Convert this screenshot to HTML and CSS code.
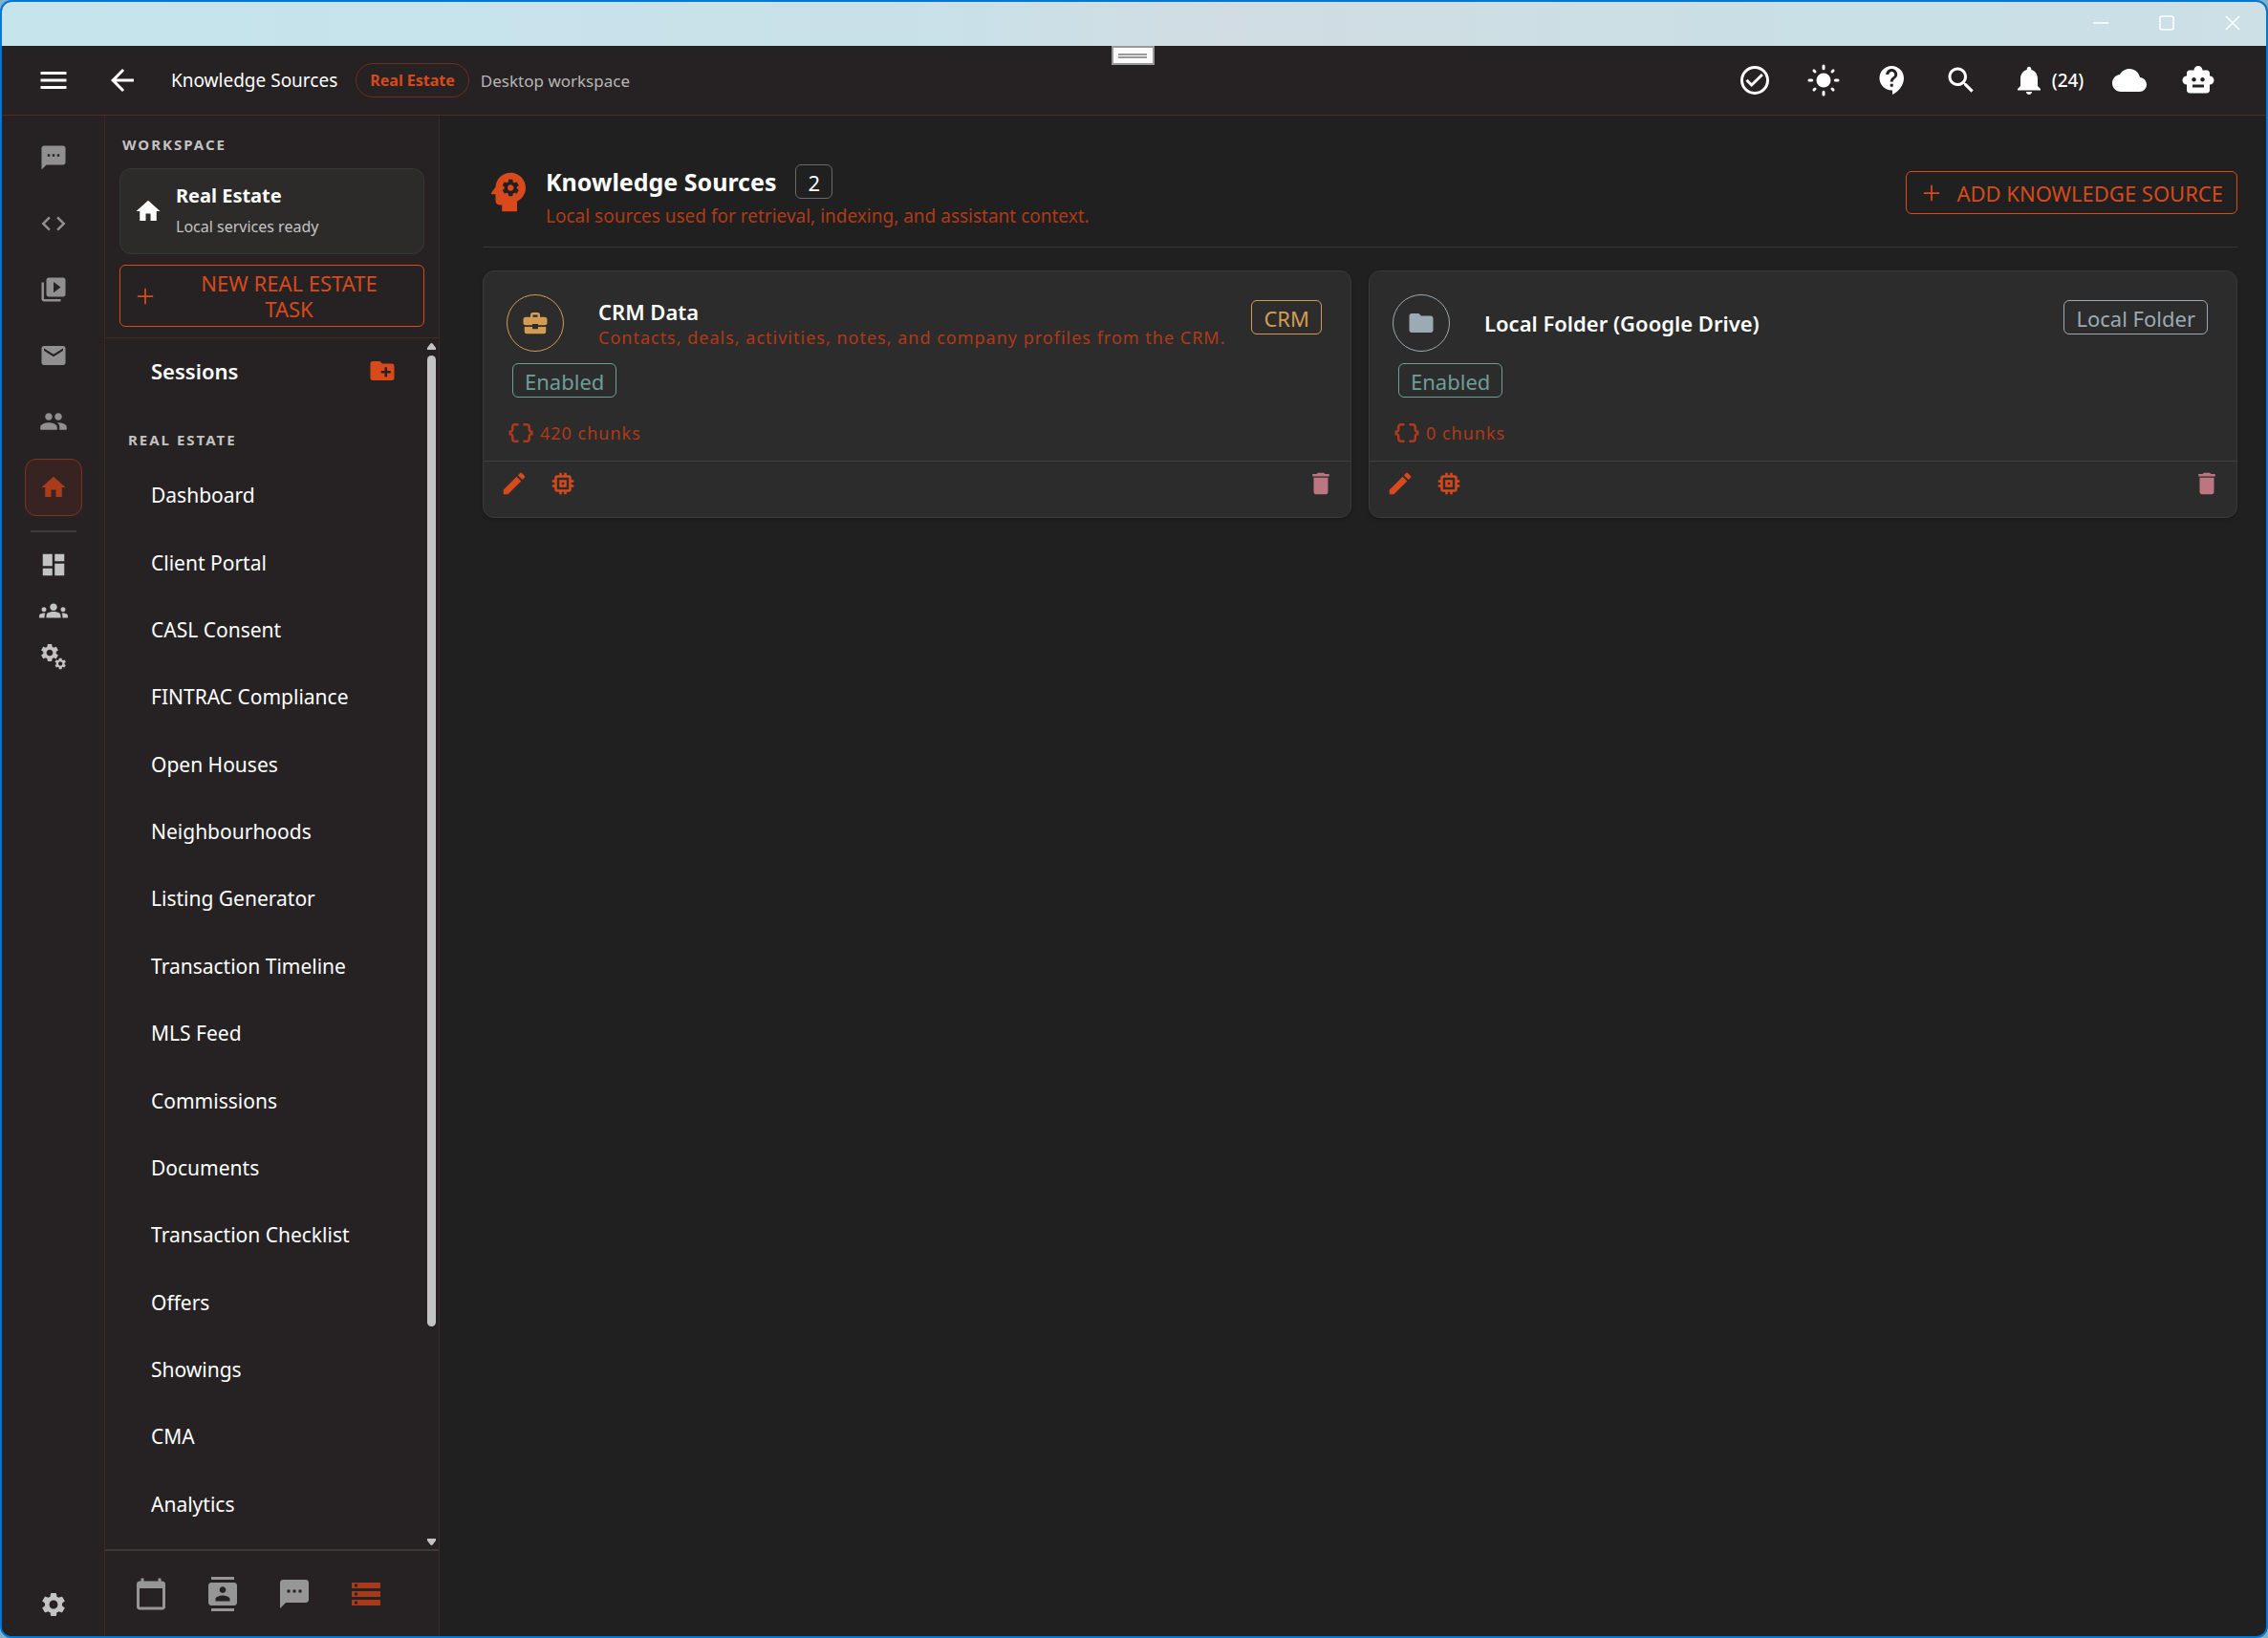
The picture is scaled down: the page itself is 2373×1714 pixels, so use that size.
FILE: index.html
```html
<!DOCTYPE html>
<html lang="en">
<head>
<meta charset="utf-8">
<title>Knowledge Sources</title>
<link rel="stylesheet" href="styles.css">
</head>
<body>
<svg class="defs" aria-hidden="true">
  <symbol id="i-chat" viewBox="0 0 24 24"><path d="M20 2H4c-1.100 0-2 .9-2 2v18l4-4h14c1.100 0 2-.9 2-2V4c0-1.100-.9-2-2-2zM9 11H7V9h2v2zm4 0h-2V9h2v2zm4 0h-2V9h2v2z"/></symbol>
  <symbol id="i-home" viewBox="0 0 24 24"><path d="M10 20v-6h4v6h5v-8h3L12 3 2 12h3v8z"/></symbol>
  <symbol id="i-plus" viewBox="0 0 24 24"><path d="M19 12.750h-6.250V19h-1.500v-6.250H5v-1.500h6.250V5h1.500v6.250H19z"/></symbol>
  <symbol id="i-gear" viewBox="0 0 24 24"><path d="M19.140 12.940c.04-.3.06-.61.06-.94 0-.32-.02-.64-.07-.94l2.030-1.580c.18-.14.23-.41.12-.61l-1.920-3.320c-.12-.22-.37-.29-.59-.22l-2.390.96c-.5-.38-1.030-.7-1.620-.94l-.36-2.540c-.04-.24-.24-.41-.48-.41h-3.840c-.24 0-.43.17-.47.41l-.36 2.540c-.59.24-1.130.57-1.620.94l-2.390-.96c-.22-.08-.47 0-.59.22L2.740 8.870c-.12.21-.08.47.12.61l2.030 1.580c-.05.3-.09.63-.09.94s.02.64.07.94l-2.030 1.580c-.18.14-.23.41-.12.61l1.920 3.320c.12.22.37.29.59.22l2.390-.96c.5.38 1.030.7 1.620.94l.36 2.540c.05.24.24.41.48.41h3.840c.24 0 .44-.17.47-.41l.36-2.540c.59-.24 1.130-.56 1.620-.94l2.390.96c.22.08.47 0 .59-.22l1.920-3.320c.12-.22.07-.47-.12-.61l-2.010-1.580zM12 15.600c-1.980 0-3.600-1.620-3.600-3.600s1.620-3.600 3.600-3.600 3.600 1.620 3.600 3.600-1.620 3.600-3.600 3.600z"/></symbol>
  <symbol id="i-pencil" viewBox="0 0 24 24"><path d="M3 17.250V21h3.750L17.810 9.940l-3.750-3.750L3 17.250zM20.710 7.040c.39-.39.39-1.020 0-1.410l-2.340-2.340c-.39-.39-1.020-.39-1.410 0l-1.830 1.830 3.750 3.750 1.830-1.830z"/></symbol>
  <symbol id="i-memory" viewBox="0 0 24 24"><path d="M15 9H9v6h6V9zm-2 4h-2v-2h2v2zm8-2V9h-2V7c0-1.100-.9-2-2-2h-2V3h-2v2h-2V3H9v2H7c-1.100 0-2 .9-2 2v2H3v2h2v2H3v2h2v2c0 1.100.9 2 2 2h2v2h2v-2h2v2h2v-2h2c1.100 0 2-.9 2-2v-2h2v-2h-2v-2h2zm-4 6H7V7h10v10z"/></symbol>
  <symbol id="i-trash" viewBox="0 0 24 24"><path d="M6 19c0 1.100.9 2 2 2h8c1.100 0 2-.9 2-2V7H6v12zM19 4h-3.500l-1-1h-5l-1 1H5v2h14V4z"/></symbol>
  <symbol id="i-braces" viewBox="0 0 24 24"><path d="M4 7v2c0 .55-.45 1-1 1H2v4h1c.55 0 1 .45 1 1v2c0 1.650 1.350 3 3 3h3v-2H7c-.55 0-1-.45-1-1v-2c0-1.300-.84-2.420-2-2.830v-.34C5.160 11.420 6 10.300 6 9V7c0-.55.45-1 1-1h3V4H7C5.350 4 4 5.350 4 7zM21 10c-.55 0-1-.45-1-1V7c0-1.650-1.350-3-3-3h-3v2h3c.55 0 1 .45 1 1v2c0 1.300.84 2.420 2 2.830v.34c-1.160.41-2 1.520-2 2.830v2c0 .55-.45 1-1 1h-3v2h3c1.650 0 3-1.350 3-3v-2c0-.55.45-1 1-1h1v-4h-1z"/></symbol>
</svg>

<div class="window">
  <div class="titlebar">
    <button class="winbtn" aria-label="Minimize"><svg class="i16" viewBox="0 0 16 16"><path class="line" d="M0 8h16"/></svg></button>
    <button class="winbtn" aria-label="Maximize"><svg class="i16" viewBox="0 0 16 16"><rect class="line" x="1" y="1" width="14" height="14" rx="2"/></svg></button>
    <button class="winbtn" aria-label="Close"><svg class="i16" viewBox="0 0 16 16"><path class="line" d="M1 1l14 14M15 1L1 15"/></svg></button>
  </div>

  <header class="appbar">
    <div class="grip"><span></span><span></span></div>
    <button class="tool" aria-label="Menu"><svg class="i36" viewBox="0 0 24 24"><path d="M3 18h18v-2H3v2zm0-5h18v-2H3v2zm0-7v2h18V6H3z"/></svg></button>
    <button class="tool" aria-label="Back"><svg class="i36" viewBox="0 0 24 24"><path d="M20 11H7.830l5.590-5.590L12 4l-8 8 8 8 1.410-1.410L7.830 13H20v-2z"/></svg></button>
    <span class="page-name">Knowledge Sources</span>
    <span class="pill">Real Estate</span>
    <span class="mode">Desktop workspace</span>
    <nav class="tools" aria-label="Tools">
      <button class="tool" aria-label="Tasks"><svg class="i36" viewBox="0 0 24 24"><g class="ring"><circle cx="12" cy="12" r="9"/><path d="M6.300 11.800l3.500 3.500 7.500-7.300"/></g></svg></button>
      <button class="tool" aria-label="Theme"><svg class="i36" viewBox="0 0 24 24"><circle cx="12" cy="12" r="5"/><path class="rays" d="M12 2v1.800M12 20.200v1.800M2 12h1.800M20.200 12h1.800M5.300 5.300l.7.7M18 18l.7.7M5.300 18.700l.7-.7M18 6l.7-.7"/></svg></button>
      <button class="tool" aria-label="Help"><svg class="i36" viewBox="0 0 24 24"><path d="M11.500 2C6.810 2 3 5.810 3 10.500S6.810 19 11.500 19h.5v3c4.860-2.340 8-7 8-11.500C20 5.810 16.190 2 11.500 2zm1 14.500h-2v-2h2v2zm0-3.500h-2c0-3.250 3-3 3-5 0-1.100-.9-2-2-2s-2 .9-2 2h-2c0-2.210 1.790-4 4-4s4 1.790 4 4c0 2.500-3 2.750-3 5z"/></svg></button>
      <button class="tool" aria-label="Search"><svg class="i36" viewBox="0 0 24 24"><path d="M15.500 14h-.79l-.28-.27C15.410 12.590 16 11.110 16 9.500 16 5.910 13.090 3 9.500 3S3 5.910 3 9.500 5.910 16 9.500 16c1.610 0 3.090-.59 4.230-1.570l.27.28v.79l5 4.990L20.490 19l-4.990-5zm-6 0C7.010 14 5 11.990 5 9.500S7.010 5 9.500 5 14 7.010 14 9.500 11.990 14 9.500 14z"/></svg></button>
      <button class="tool bell" aria-label="Notifications"><svg class="i36" viewBox="0 0 24 24"><path d="M12 22c1.100 0 2-.9 2-2h-4c0 1.100.89 2 2 2zm6-6v-5c0-3.070-1.640-5.640-4.500-6.320V4c0-.83-.67-1.500-1.500-1.500s-1.500.67-1.500 1.500v.68C7.630 5.360 6 7.920 6 11v5l-2 2v1h16v-1l-2-2z"/></svg><span>(24)</span></button>
      <button class="tool" aria-label="Cloud"><svg class="i36" viewBox="0 0 24 24"><path d="M19.350 10.040C18.670 6.590 15.640 4 12 4 9.110 4 6.600 5.640 5.350 8.040 2.340 8.360 0 10.910 0 14c0 3.310 2.690 6 6 6h13c2.760 0 5-2.240 5-5 0-2.640-2.050-4.780-4.650-4.960z"/></svg></button>
      <button class="tool" aria-label="Assistant"><svg class="i36" viewBox="0 0 24 24"><path d="M20 9V7c0-1.100-.9-2-2-2h-3c0-1.660-1.340-3-3-3S9 3.340 9 5H6c-1.100 0-2 .9-2 2v2c-1.660 0-3 1.340-3 3s1.340 3 3 3v4c0 1.100.9 2 2 2h12c1.100 0 2-.9 2-2v-4c1.660 0 3-1.340 3-3s-1.340-3-3-3zM7.500 11.500c0-.83.67-1.500 1.500-1.500s1.500.67 1.500 1.500S9.830 13 9 13s-1.500-.67-1.500-1.500zM16 17H8v-2h8v2zm-1-4c-.83 0-1.500-.67-1.500-1.500S14.170 10 15 10s1.500.67 1.500 1.500S15.830 13 15 13z"/></svg></button>
    </nav>
  </header>

  <div class="body">
    <nav class="rail" aria-label="Apps">
      <button class="app" aria-label="Chat"><svg class="i30"><use href="#i-chat"/></svg></button>
      <button class="app" aria-label="Code"><svg class="i30" viewBox="0 0 24 24"><path d="M9.400 16.600L4.800 12l4.600-4.600L8 6l-6 6 6 6 1.400-1.400zm5.200 0l4.600-4.600-4.600-4.600L16 6l6 6-6 6-1.400-1.400z"/></svg></button>
      <button class="app" aria-label="Media"><svg class="i30" viewBox="0 0 24 24"><path d="M4 6H2v14c0 1.100.9 2 2 2h14v-2H4V6zm16-4H8c-1.100 0-2 .9-2 2v12c0 1.100.9 2 2 2h12c1.100 0 2-.9 2-2V4c0-1.100-.9-2-2-2zm-8 12.500v-9l6 4.500-6 4.500z"/></svg></button>
      <button class="app" aria-label="Mail"><svg class="i30" viewBox="0 0 24 24"><path d="M20 4H4c-1.100 0-1.990.9-1.990 2L2 18c0 1.100.9 2 2 2h16c1.100 0 2-.9 2-2V6c0-1.100-.9-2-2-2zm0 4l-8 5-8-5V6l8 5 8-5v2z"/></svg></button>
      <button class="app" aria-label="People"><svg class="i30" viewBox="0 0 24 24"><path d="M16 11c1.660 0 2.990-1.340 2.990-3S17.660 5 16 5c-1.660 0-3 1.340-3 3s1.340 3 3 3zm-8 0c1.660 0 2.990-1.340 2.990-3S9.660 5 8 5C6.340 5 5 6.340 5 8s1.340 3 3 3zm0 2c-2.330 0-7 1.170-7 3.500V19h14v-2.500c0-2.330-4.670-3.500-7-3.500zm8 0c-.29 0-.62.02-.97.05 1.160.84 1.970 1.970 1.970 3.450V19h6v-2.500c0-2.330-4.670-3.500-7-3.500z"/></svg></button>
      <button class="app active" aria-label="Real Estate"><svg class="i30"><use href="#i-home"/></svg></button>
      <hr class="rail-line">
      <button class="app small" aria-label="Dashboard"><svg class="i30" viewBox="0 0 24 24"><path d="M3 13h8V3H3v10zm0 8h8v-6H3v6zm10 0h8V11h-8v10zm0-18v6h8V3h-8z"/></svg></button>
      <button class="app small" aria-label="Teams"><svg class="i30" viewBox="0 0 24 24"><path d="M12 12.750c1.630 0 3.070.39 4.240.9 1.080.48 1.760 1.560 1.760 2.730V18H6v-1.610c0-1.180.68-2.260 1.760-2.730 1.170-.52 2.610-.91 4.240-.91zM4 13c1.100 0 2-.9 2-2s-.9-2-2-2-2 .9-2 2 .9 2 2 2zm1.130 1.100c-.37-.06-.74-.1-1.130-.1-.99 0-1.930.21-2.780.58C.48 14.900 0 15.620 0 16.430V18h4.500v-1.610c0-.83.23-1.610.63-2.290zM20 13c1.100 0 2-.9 2-2s-.9-2-2-2-2 .9-2 2 .9 2 2 2zm4 3.430c0-.81-.48-1.530-1.220-1.850-.85-.37-1.790-.58-2.780-.58-.39 0-.76.04-1.130.1.4.68.63 1.460.63 2.290V18H24v-1.570zM12 6c1.660 0 3 1.340 3 3s-1.340 3-3 3-3-1.340-3-3 1.340-3 3-3z"/></svg></button>
      <button class="app small" aria-label="Services"><svg class="i30" viewBox="0 0 24 24"><use href="#i-gear" x="-0.200" y="-0.200" width="18" height="18"/><use href="#i-gear" x="12" y="12.200" width="11.500" height="11.500"/></svg></button>
      <button class="app small settings" aria-label="Settings"><svg class="i30"><use href="#i-gear"/></svg></button>
    </nav>

    <aside class="panel">
      <div class="panel-top">
        <h2 class="label">WORKSPACE</h2>
        <div class="workspace">
          <svg class="i30"><use href="#i-home"/></svg>
          <div>
            <div class="workspace-name">Real Estate</div>
            <div class="workspace-state">Local services ready</div>
          </div>
        </div>
        <button class="outline new-task"><svg class="i28"><use href="#i-plus"/></svg><span>NEW REAL ESTATE TASK</span></button>
      </div>
      <div class="scroller">
        <div class="scroll-content">
          <div class="sessions"><h2>Sessions</h2>
            <button class="bare accent" aria-label="New folder"><svg class="i30" viewBox="0 0 24 24"><path d="M20 6h-8l-2-2H4c-1.110 0-1.990.89-1.990 2L2 18c0 1.110.89 2 2 2h16c1.110 0 2-.89 2-2V8c0-1.110-.89-2-2-2zm-1 8h-3v3h-2v-3h-3v-2h3V9h2v3h3v2z"/></svg></button>
          </div>
          <h2 class="label section">REAL ESTATE</h2>
          <ul class="nav">
            <li><a href="#">Dashboard</a></li>
            <li><a href="#">Client Portal</a></li>
            <li><a href="#">CASL Consent</a></li>
            <li><a href="#">FINTRAC Compliance</a></li>
            <li><a href="#">Open Houses</a></li>
            <li><a href="#">Neighbourhoods</a></li>
            <li><a href="#">Listing Generator</a></li>
            <li><a href="#">Transaction Timeline</a></li>
            <li><a href="#">MLS Feed</a></li>
            <li><a href="#">Commissions</a></li>
            <li><a href="#">Documents</a></li>
            <li><a href="#">Transaction Checklist</a></li>
            <li><a href="#">Offers</a></li>
            <li><a href="#">Showings</a></li>
            <li><a href="#">CMA</a></li>
            <li><a href="#">Analytics</a></li>
          </ul>
        </div>
        <div class="scrollbar">
          <svg viewBox="0 0 9 7"><path d="M3 1q1.500-2 3 0l3 4v2H0V5z"/></svg>
          <div class="track"><div class="thumb"></div></div>
          <svg viewBox="0 0 9 7"><path d="M3 6q1.500 2 3 0l3-4V0H0v2z"/></svg>
        </div>
      </div>
      <nav class="dock" aria-label="Panels">
        <button class="bare" aria-label="Calendar"><svg class="i36" viewBox="0 0 24 24"><path d="M20 3h-1V1h-2v2H7V1H5v2H4c-1.100 0-2 .9-2 2v16c0 1.100.9 2 2 2h16c1.100 0 2-.9 2-2V5c0-1.100-.9-2-2-2zm0 18H4V8h16v13z"/></svg></button>
        <button class="bare" aria-label="Contacts"><svg class="i36" viewBox="0 0 24 24"><path d="M20 0H4v2h16V0zM4 24h16v-2H4v2zM20 4H4c-1.100 0-2 .9-2 2v12c0 1.100.9 2 2 2h16c1.100 0 2-.9 2-2V6c0-1.100-.9-2-2-2zm-8 2.750c1.240 0 2.250 1.010 2.250 2.250s-1.010 2.250-2.250 2.250S9.750 10.240 9.750 9 10.760 6.750 12 6.750zM17 17H7v-1.500c0-1.670 3.330-2.500 5-2.500s5 .83 5 2.500V17z"/></svg></button>
        <button class="bare" aria-label="Messages"><svg class="i36"><use href="#i-chat"/></svg></button>
        <button class="bare current" aria-label="Sources"><svg class="i36" viewBox="0 0 24 24"><path d="M2 20h20v-4H2v4zm2-3h2v2H4v-2zM2 4v4h20V4H2zm4 3H4V5h2v2zm-4 7h20v-4H2v4zm2-3h2v2H4v-2z"/></svg></button>
      </nav>
    </aside>

    <main class="main">
      <div class="page-head">
        <svg class="head-icon" viewBox="0 0 24 24"><path d="M13 3C9.230 3 6.190 5.950 6 9.660l-1.920 2.530c-.24.31 0 .81.42.81H6v3c0 1.110.89 2 2 2h1v3h7v-4.690c2.370-1.120 4-3.510 4-6.310 0-3.860-3.120-7-7-7z"/><use class="hole" href="#i-gear" x="8.200" y="5.200" width="9.600" height="9.600"/></svg>
        <div class="page-title">
          <div class="title-row"><h1>Knowledge Sources</h1><span class="chip count">2</span></div>
          <p class="sub">Local sources used for retrieval, indexing, and assistant context.</p>
        </div>
        <button class="outline add"><svg class="i28"><use href="#i-plus"/></svg>ADD KNOWLEDGE SOURCE</button>
      </div>

      <div class="cards">
        <article class="card crm">
          <div class="card-body">
            <div class="card-head">
              <div class="avatar"><svg class="i30" viewBox="0 0 24 24"><path d="M8 7V5.200Q8 3.200 10 3.200h4q2 0 2 2V7h3.800Q22 7 22 9v2.800q0 2-2 2h-5.600v-1H9.600v1H4q-2 0-2-2V9q0-2 2-2zm2 0h4V5.200h-4zM3 15.200h6.600v1.800h4.800v-1.800H21V19q0 2-2 2H5q-2 0-2-2z"/></svg></div>
              <div class="card-title"><h3>CRM Data</h3><p class="caption">Contacts, deals, activities, notes, and company profiles from the CRM.</p></div>
              <span class="chip type">CRM</span>
            </div>
            <span class="chip enabled">Enabled</span>
            <div class="chunks caption"><svg class="i30"><use href="#i-braces"/></svg>420 chunks</div>
          </div>
          <div class="card-actions">
            <button class="bare accent" aria-label="Edit"><svg class="i30"><use href="#i-pencil"/></svg></button>
            <button class="bare accent" aria-label="Index"><svg class="i30"><use href="#i-memory"/></svg></button>
            <button class="bare delete" aria-label="Delete"><svg class="i30"><use href="#i-trash"/></svg></button>
          </div>
        </article>
        <article class="card folder">
          <div class="card-body">
            <div class="card-head">
              <div class="avatar"><svg class="i30" viewBox="0 0 24 24"><path d="M10 4H4c-1.100 0-1.990.9-1.990 2L2 18c0 1.100.9 2 2 2h16c1.100 0 2-.9 2-2V8c0-1.100-.9-2-2-2h-8l-2-2z"/></svg></div>
              <div class="card-title"><h3>Local Folder (Google Drive)</h3></div>
              <span class="chip type">Local Folder</span>
            </div>
            <span class="chip enabled">Enabled</span>
            <div class="chunks caption"><svg class="i30"><use href="#i-braces"/></svg>0 chunks</div>
          </div>
          <div class="card-actions">
            <button class="bare accent" aria-label="Edit"><svg class="i30"><use href="#i-pencil"/></svg></button>
            <button class="bare accent" aria-label="Index"><svg class="i30"><use href="#i-memory"/></svg></button>
            <button class="bare delete" aria-label="Delete"><svg class="i30"><use href="#i-trash"/></svg></button>
          </div>
        </article>
      </div>
    </main>
  </div>
</div>
</body>
</html>
```
FILE: styles.css
```css
:root {
  --accent: #d84a1b;
  --accent-dim: #b03a17;
  --bar: #262223;
}

* { box-sizing: border-box; }

body {
  margin: 0;
  min-height: 100vh;
  display: flex;
  background: #7fb2c8;
  color: #fff;
  font-family: "Noto Sans", "Open Sans", sans-serif;
  font-size: 21px;
}

h1, h2, h3, p, ul { margin: 0; padding: 0; }
svg { fill: currentColor; flex: none; display: block; }
button {
  margin: 0;
  padding: 0;
  border: 0;
  background: none;
  color: inherit;
  font: inherit;
  cursor: pointer;
}

.defs { display: none; }
.i16 { width: 16px; height: 16px; }
.i28 { width: 28px; height: 28px; }
.i30 { width: 30px; height: 30px; }
.i36 { width: 36px; height: 36px; }

.window {
  flex: 1;
  display: flex;
  flex-direction: column;
  min-height: 100vh;
  border: 2px solid #0078d7;
  border-radius: 12px;
  overflow: hidden;
  background: #202020;
}

/* Title bar */
.titlebar {
  height: 46px;
  display: flex;
  justify-content: flex-end;
  padding: 0 1px 3px 0;
  background: linear-gradient(90deg, #c5e4ec 0%, #c8e1e9 40%, #d1dde2 54%, #c8e0e6 82%, #cce0e6 100%);
}
.winbtn { width: 69px; display: grid; place-items: center; }
.line { fill: none; stroke: #fff; stroke-width: 1.5; }

/* App bar */
.appbar {
  position: relative;
  height: 73px;
  display: flex;
  align-items: center;
  padding: 0 35px 0 18px;
  background: var(--bar);
  border-bottom: 1px solid #572a1e;
}
.grip {
  position: absolute;
  top: 0;
  left: 50%;
  margin-left: -24px;
  width: 45px;
  height: 20px;
  border: 2px solid #999;
  background: #fafafa;
  display: flex;
  flex-direction: column;
  align-items: center;
  justify-content: center;
  gap: 1px;
}
.grip span { width: 30px; height: 2px; background: #999; }
.tool { width: 72px; height: 72px; display: flex; align-items: center; justify-content: center; }
.page-name { margin-left: 15px; font-size: 19px; }
.pill {
  margin: 0 12px 0 19px;
  height: 36px;
  line-height: 34px;
  padding: 0 14px;
  border: 1px solid #6b2f20;
  border-radius: 18px;
  color: var(--accent);
  font-size: 16px;
  font-weight: 700;
}
.mode { color: #b8b6b6; font-size: 17px; }
.tools { display: flex; margin-left: auto; }
.bell { width: 104px; gap: 6px; padding-left: 5px; font-size: 19px; font-weight: 500; }
.rays, .ring { fill: none; stroke: currentColor; stroke-width: 2; }
.rays { stroke-linecap: round; }

.body { flex: 1; display: flex; }

/* App rail */
.rail {
  width: 108px;
  display: flex;
  flex-direction: column;
  align-items: center;
  gap: 9px;
  padding: 14px 0 9px;
  background: var(--bar);
  border-right: 1px solid #3f2822;
  color: #919090;
}
.app {
  width: 60px;
  height: 60px;
  display: grid;
  place-items: center;
  border: 1px solid transparent;
  border-radius: 12px;
}
.app.active { color: #a93c1a; background: #372422; border-color: #80341f; }
.app.small { height: 39px; color: #c4c3c3; }
.rail-line { width: 48px; height: 2px; margin: 6px 0 5px; border: 0; background: #3a3a3a; }
.rail .settings { height: 48px; margin-top: auto; }

/* Side panel */
.panel {
  width: 350px;
  display: flex;
  flex-direction: column;
  background: var(--bar);
  border-right: 1px solid #3f2822;
}
.panel-top {
  height: 233px;
  padding: 17px 15px 0;
  border-bottom: 1px solid #3f2b26;
}
.label {
  padding-left: 3px;
  color: #c4c2c2;
  font-size: 15px;
  line-height: 26px;
  font-weight: 700;
  letter-spacing: 2px;
}
.workspace {
  margin-top: 12px;
  height: 90px;
  display: flex;
  align-items: center;
  gap: 14px;
  padding: 0 14px;
  border: 1px solid #383737;
  border-radius: 12px;
  background: #2c2b2a;
}
.workspace-name { font-size: 20px; line-height: 32px; font-weight: 700; }
.workspace-state { font-size: 16px; line-height: 32px; color: #c4c3c3; }
.outline {
  display: flex;
  align-items: center;
  border: 1px solid var(--accent);
  border-radius: 6px;
  color: var(--accent);
  font-size: 22px;
}
.new-task {
  width: 100%;
  height: 65px;
  margin-top: 11px;
  padding: 0 4px 0 12px;
  line-height: 27px;
}
.new-task span { flex: 1; padding: 0 30px; }

.scroller { flex: 1; display: flex; }
.scroll-content { flex: 1; display: flex; flex-direction: column; }
.sessions {
  height: 68px;
  display: flex;
  align-items: center;
  justify-content: space-between;
  padding: 0 32px 0 48px;
}
.sessions h2 { font-size: 22px; font-weight: 600; }
.section { margin: 25px 0 10px; padding-left: 24px; }
.nav {
  flex: 1;
  display: grid;
  grid-auto-rows: 1fr;
  padding-bottom: 12px;
  list-style: none;
}
.nav li { display: flex; align-items: center; min-height: 48px; }
.nav a { padding-left: 48px; color: #fff; text-decoration: none; font-size: 21px; line-height: 30px; }
.scrollbar {
  width: 12px;
  display: flex;
  flex-direction: column;
  padding: 5px 3px 4px 0;
  gap: 6px;
  color: #c4c4c4;
}
.scrollbar svg { width: 9px; height: 7px; }
.track { flex: 1; }
.thumb { height: 82.5%; border-radius: 5px; background: #c4c4c4; }
.dock {
  height: 91px;
  display: flex;
  gap: 39px;
  padding: 27px 30px;
  border-top: 2px solid #433835;
  color: #979696;
}
.dock .current { color: #a63a19; }
.accent { color: var(--accent); }

/* Main */
.main { flex: 1; min-width: 0; padding: 45px 30px 45px 45px; }
.page-head {
  height: 93px;
  display: flex;
  align-items: flex-start;
  border-bottom: 1px solid #373737;
}
.head-icon { width: 54px; height: 54px; margin-top: 8px; color: var(--accent); }
.hole { color: #202020; }
.page-title { margin-left: 12px; }
.title-row { display: flex; align-items: center; gap: 20px; height: 48px; }
h1 { font-size: 25px; font-weight: 700; line-height: 36px; }
.sub { color: var(--accent-dim); font-size: 19px; line-height: 24px; }
.caption { color: var(--accent-dim); font-size: 18px; line-height: 24px; letter-spacing: 1px; }
.chip {
  display: inline-block;
  height: 36px;
  padding: 0 12px;
  border: 1px solid currentColor;
  border-radius: 6px;
  font-size: 22px;
  line-height: 36px;
  white-space: nowrap;
}
.count { border-color: #6a6a6a; }
.add { height: 45px; margin: 13px 0 0 auto; padding: 0 14px 0 12px; gap: 12px; }

.cards {
  display: grid;
  grid-template-columns: 1fr 1fr;
  gap: 18px;
  margin-top: 24px;
}
.card {
  border: 1px solid #3a3a3a;
  border-radius: 12px;
  background: #2c2c2c;
  box-shadow: 0 2px 4px rgba(0, 0, 0, .2);
}
.card-body {
  display: flex;
  flex-direction: column;
  align-items: flex-start;
  padding: 24px 30px 4px 24px;
}
.card-head { display: flex; align-self: stretch; height: 60px; }
.avatar {
  width: 60px;
  height: 60px;
  display: grid;
  place-items: center;
  border: 1px solid currentColor;
  border-radius: 50%;
}
.crm .avatar, .crm .type { color: #d39c52; }
.folder .avatar, .folder .type { color: #9caab3; }
.card-title { flex: 1; margin-left: 36px; display: flex; flex-direction: column; justify-content: center; }
h3 { font-size: 22px; font-weight: 600; line-height: 30px; }
.type { margin-top: 6px; }
.enabled { margin: 12px 0 0 6px; color: #6e9f97; }
.chunks {
  height: 50px;
  display: flex;
  align-items: center;
  gap: 5px;
  margin-top: 12px;
}
.card-actions {
  height: 59px;
  display: flex;
  gap: 21px;
  padding: 8px 16px 20px 17px;
  border-top: 1px solid #3f3f3f;
}
.delete { margin-left: auto; color: #bb7680; }
```
